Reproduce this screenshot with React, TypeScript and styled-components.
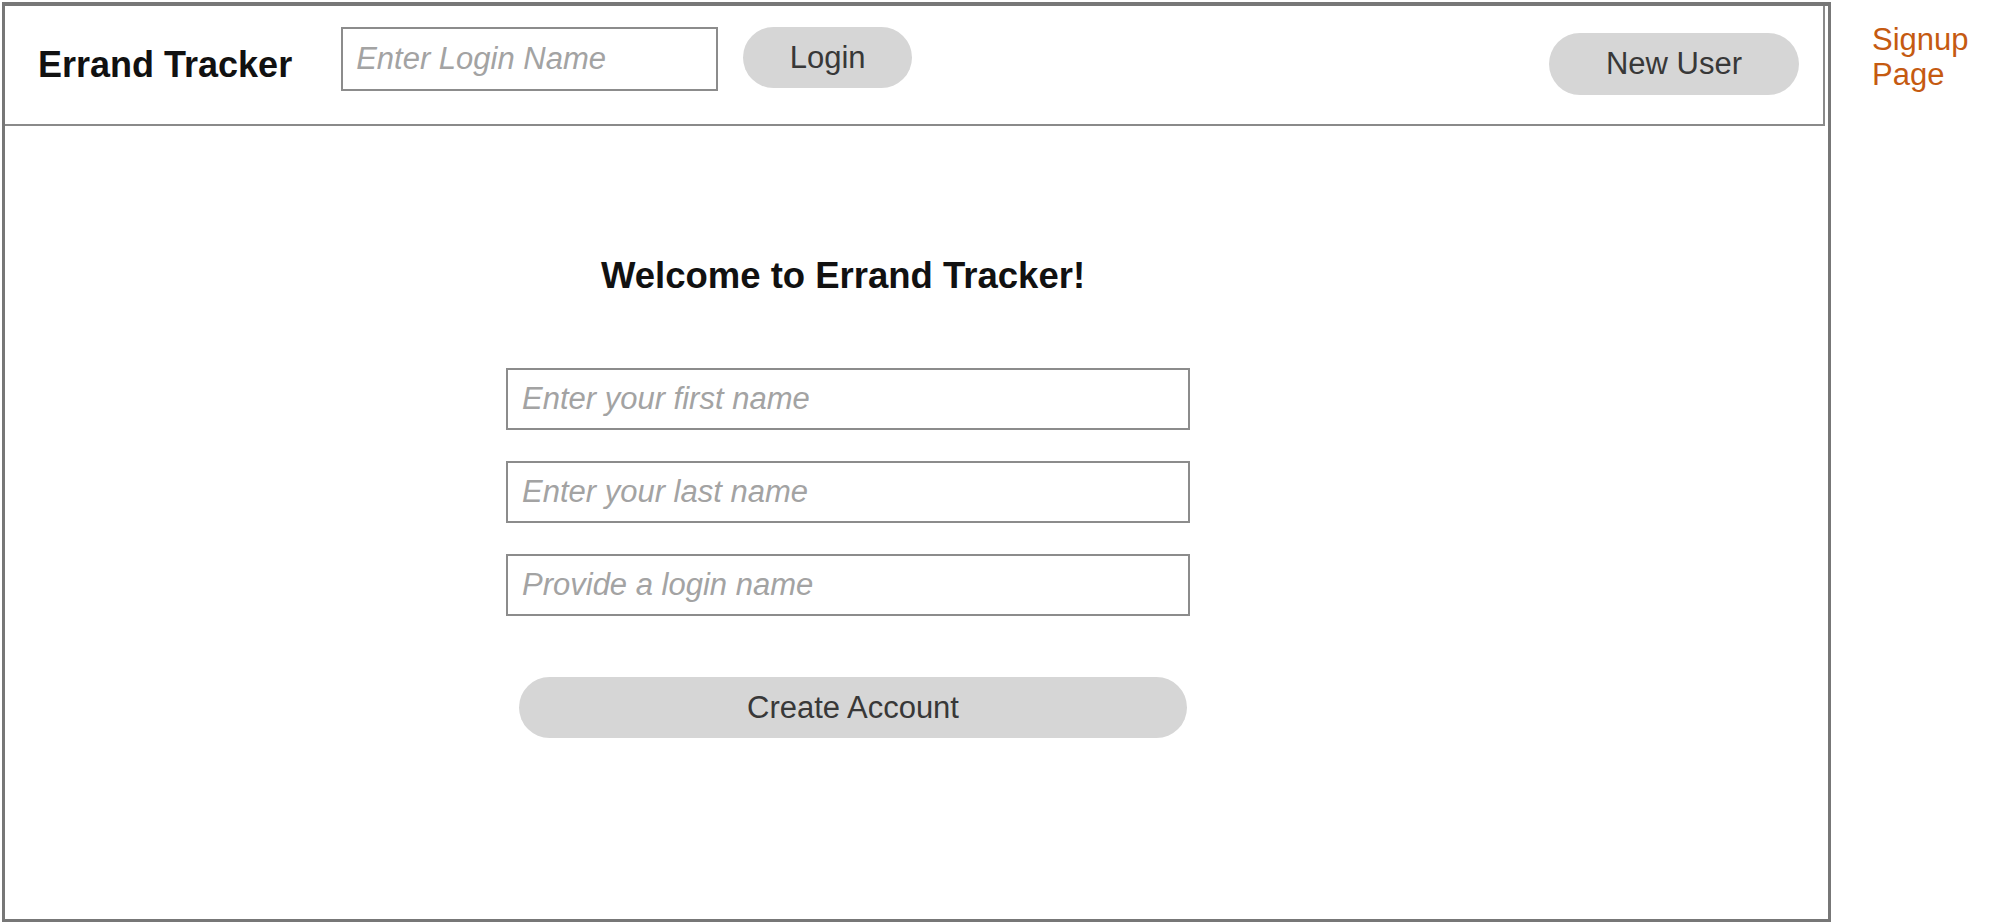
import React from "react";
import styled, { createGlobalStyle } from "styled-components";

const Global = createGlobalStyle`
  html, body {
    margin: 0;
    padding: 0;
    background: #ffffff;
    font-family: "Liberation Sans", Arial, sans-serif;
  }
  * { box-sizing: border-box; }
`;

const Page = styled.div`
  display: flex;
  align-items: flex-start;
  width: 2000px;
  height: 922px;
  padding: 2px 0 0 2px;
  overflow: hidden;
`;

const Frame = styled.div`
  width: 1829px;
  height: 920px;
  border: 3px solid #777777;
  border-top-width: 4px;
  display: flex;
  flex-direction: column;
`;

const Header = styled.header`
  height: 120px;
  margin-right: 3px;
  border-right: 2px solid #8a8a8a;
  border-bottom: 2px solid #8a8a8a;
  display: flex;
  align-items: center;
  padding: 0 24px 0 33px;
`;

const Title = styled.h1`
  margin: 0 49px 0 0;
  font-size: 36px;
  line-height: 40px;
  font-weight: 700;
  color: #111111;
  white-space: nowrap;
`;

const Field = styled.input<{ $w: number; $h: number }>`
  width: ${(p) => p.$w}px;
  height: ${(p) => p.$h}px;
  border: 2px solid #8c8c8c;
  border-radius: 0;
  padding: 0 0 0 14px;
  font-family: "Liberation Sans", Arial, sans-serif;
  font-size: 31px;
  font-style: italic;
  color: #333;
  background: #fff;
  outline: none;
  &::placeholder {
    color: #a3a3a3;
    font-style: italic;
  }
`;

const HeaderField = styled(Field)`
  margin-bottom: 12px;
  padding-left: 13px;
`;

const Pill = styled.button<{ $w: number; $h: number }>`
  width: ${(p) => p.$w}px;
  height: ${(p) => p.$h}px;
  border: none;
  border-radius: 999px;
  background: #d6d6d6;
  color: #383838;
  font-family: "Liberation Sans", Arial, sans-serif;
  font-size: 31px;
  padding: 0;
  cursor: pointer;
`;

const LoginButton = styled(Pill)`
  margin: 0 0 15px 25px;
`;

const NewUserButton = styled(Pill)`
  margin-left: auto;
  margin-bottom: 3px;
`;

const Content = styled.main`
  flex: 1;
  padding: 130px 0 0 501px;
`;

const Form = styled.form`
  width: 684px;
  display: flex;
  flex-direction: column;
  margin: 0;
`;

const Heading = styled.h2`
  margin: 0 0 72px -10px;
  font-size: 36.5px;
  line-height: 40px;
  font-weight: 700;
  color: #111111;
  text-align: center;
`;

const Fields = styled.div`
  display: flex;
  flex-direction: column;
  gap: 31px;
`;

const CreateButton = styled(Pill)`
  margin: 61px 0 0 13px;
`;

const Note = styled.div`
  margin: 20px 0 0 41px;
  font-size: 31px;
  line-height: 35px;
  color: #c55a11;
`;

export default function App() {
  return (
    <>
      <Global />
      <Page>
        <Frame>
          <Header>
            <Title>Errand Tracker</Title>
            <HeaderField $w={377} $h={64} placeholder="Enter Login Name" />
            <LoginButton $w={169} $h={61} type="button">
              Login
            </LoginButton>
            <NewUserButton $w={250} $h={62} type="button">
              New User
            </NewUserButton>
          </Header>
          <Content>
            <Form onSubmit={(e) => e.preventDefault()}>
              <Heading>Welcome to Errand Tracker!</Heading>
              <Fields>
                <Field $w={684} $h={62} placeholder="Enter your first name" />
                <Field $w={684} $h={62} placeholder="Enter your last name" />
                <Field $w={684} $h={62} placeholder="Provide a login name" />
              </Fields>
              <CreateButton $w={668} $h={61} type="submit">
                Create Account
              </CreateButton>
            </Form>
          </Content>
        </Frame>
        <Note>
          Signup
          <br />
          Page
        </Note>
      </Page>
    </>
  );
}
